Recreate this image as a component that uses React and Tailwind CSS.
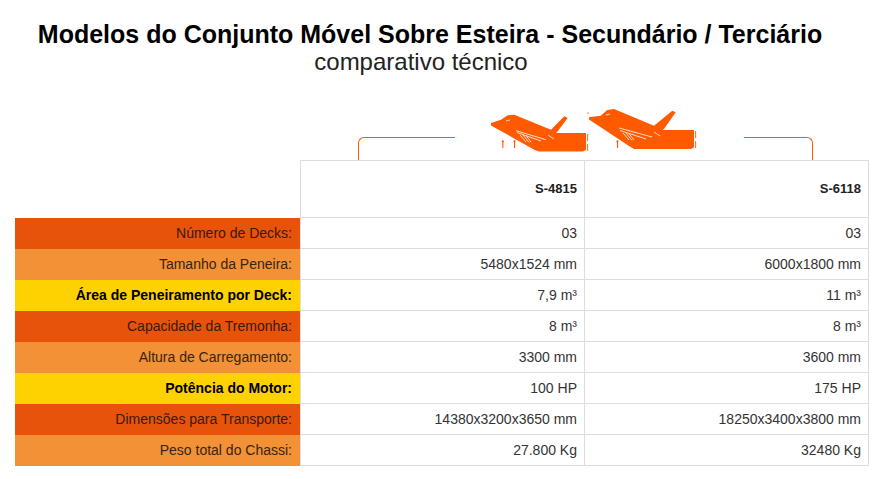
import React from 'react'

const rows = [
  { label: 'Número de Decks:', a: '03', b: '03', tone: 'dark' },
  { label: 'Tamanho da Peneira:', a: '5480x1524 mm', b: '6000x1800 mm', tone: 'light' },
  { label: 'Área de Peneiramento por Deck:', a: '7,9 m³', b: '11 m³', tone: 'yellow' },
  { label: 'Capacidade da Tremonha:', a: '8 m³', b: '8 m³', tone: 'dark' },
  { label: 'Altura de Carregamento:', a: '3300 mm', b: '3600 mm', tone: 'light' },
  { label: 'Potência do Motor:', a: '100 HP', b: '175 HP', tone: 'yellow' },
  { label: 'Dimensões para Transporte:', a: '14380x3200x3650 mm', b: '18250x3400x3800 mm', tone: 'dark' },
  { label: 'Peso total do Chassi:', a: '27.800 Kg', b: '32480 Kg', tone: 'light' },
]

const toneClass = {
  dark: 'bg-[#e8530c] text-[#3a1a0a]',
  light: 'bg-[#f29135] text-[#3a2412]',
  yellow: 'bg-[#fed200] text-black font-bold',
}

// the two tracked screens, side by side (218x52 px)
function Machines({ className }) {
  return (
    <svg viewBox="0 0 218 52" className={className}>
      {/* S-4815 */}
      <g transform="translate(0,4)">
        <polygon
          fill="#ff5a00"
          points="5,15 15,11.7 21.7,7.3 28.3,6.7 65,21.7 78.3,8.3 81.7,10 71.7,23.3 70,25 100,25 100,41.7 97,43.5 53,43.5 48.3,41.7 5,17.5"
        />
        <g stroke="#fff" strokeWidth="0.8">
          <line x1="30" y1="22.7" x2="60" y2="31.7" />
          <line x1="31" y1="24.5" x2="55" y2="33" />
          <line x1="34" y1="27" x2="40" y2="34" />
          <line x1="37" y1="27" x2="43" y2="34.5" />
          <line x1="40" y1="27.5" x2="45" y2="34" />
          <line x1="62" y1="27" x2="68" y2="31" />
          <line x1="20" y1="13" x2="24" y2="12" />
        </g>
        <g fill="#ff5a00">
          <rect x="16.3" y="34" width="1.1" height="6" />
          <circle cx="16.8" cy="33.3" r="1.1" />
          <rect x="28" y="34" width="1.1" height="6" />
          <circle cx="28.5" cy="33.3" r="1.1" />
          <rect x="101.2" y="26" width="0.9" height="7" />
          <rect x="101.2" y="36" width="0.9" height="7" />
          <circle cx="102" cy="5" r="0.7" />
        </g>
      </g>
      {/* S-6118 */}
      <g transform="translate(98,0)">
        <polygon
          fill="#ff5a00"
          points="5,13.3 16.7,11.7 23.3,6 30,5 70,21.7 88.3,6.7 91.7,8.3 80,25 78.3,26 110,26 110,43.3 107,45 50,45 45,42 5,15.5"
        />
        <g stroke="#fff" strokeWidth="0.8">
          <line x1="35" y1="24" x2="68" y2="33" />
          <line x1="36" y1="26.5" x2="62" y2="35" />
          <line x1="39" y1="29" x2="45" y2="36" />
          <line x1="42" y1="29" x2="48" y2="36.5" />
          <line x1="45" y1="29.5" x2="50" y2="36" />
          <line x1="70" y1="28" x2="76" y2="32" />
          <line x1="22" y1="11" x2="26" y2="10" />
        </g>
        <g fill="#ff5a00">
          <rect x="33" y="38" width="1.1" height="6" />
          <circle cx="33.5" cy="37.3" r="1.1" />
          <rect x="111.2" y="27" width="0.9" height="7" />
          <rect x="111.2" y="37" width="0.9" height="7" />
        </g>
      </g>
    </svg>
  )
}

export default function App() {
  return (
    <div className="w-[885px] h-[479px] bg-white font-['Liberation_Sans',Arial,sans-serif] text-[#333]">
      <div className="pt-[21px] pr-[25px] text-center text-[25px] leading-[26px] font-bold text-black">
        Modelos do Conjunto Móvel Sobre Esteira - Secundário / Terciário
      </div>
      <div className="pr-[43px] text-center text-[24px] leading-[30px] text-[#222]">comparativo técnico</div>

      <div className="ml-[15px] mt-[33px] flex h-[50px] items-end">
        <div className="ml-[343px] h-[23px] w-[97px] rounded-tl-[6px] border-l-[1.5px] border-t-[1.5px] border-[#ff5a00]" />
        <Machines className="ml-[31px] mb-[4px] h-[52px] w-[218px]" />
        <div className="ml-[40px] h-[23px] w-[69px] rounded-tr-[6px] border-r-[1.5px] border-t-[1.5px] border-[#ff5a00]" />
      </div>

      <div className="ml-[15px] grid w-[854px] grid-cols-[285px_285px_284px] text-[14px]">
        <div className="h-[58px]" />
        <div className="flex h-[58px] items-center justify-end border-x border-y border-[#ddd] pr-[7px] text-[13px] font-bold text-[#222]">
          S-4815
        </div>
        <div className="flex h-[58px] items-center justify-end border-y border-r border-[#ddd] pr-[7px] text-[13px] font-bold text-[#222]">
          S-6118
        </div>
        {rows.map((r) => (
          <React.Fragment key={r.label}>
            <div className={`flex h-[31px] items-center justify-end pr-[8px] ${toneClass[r.tone]}`}>{r.label}</div>
            <div className="flex h-[31px] items-center justify-end border-x border-b border-[#ddd] pr-[7px]">{r.a}</div>
            <div className="flex h-[31px] items-center justify-end border-b border-r border-[#ddd] pr-[7px]">{r.b}</div>
          </React.Fragment>
        ))}
      </div>
    </div>
  )
}
